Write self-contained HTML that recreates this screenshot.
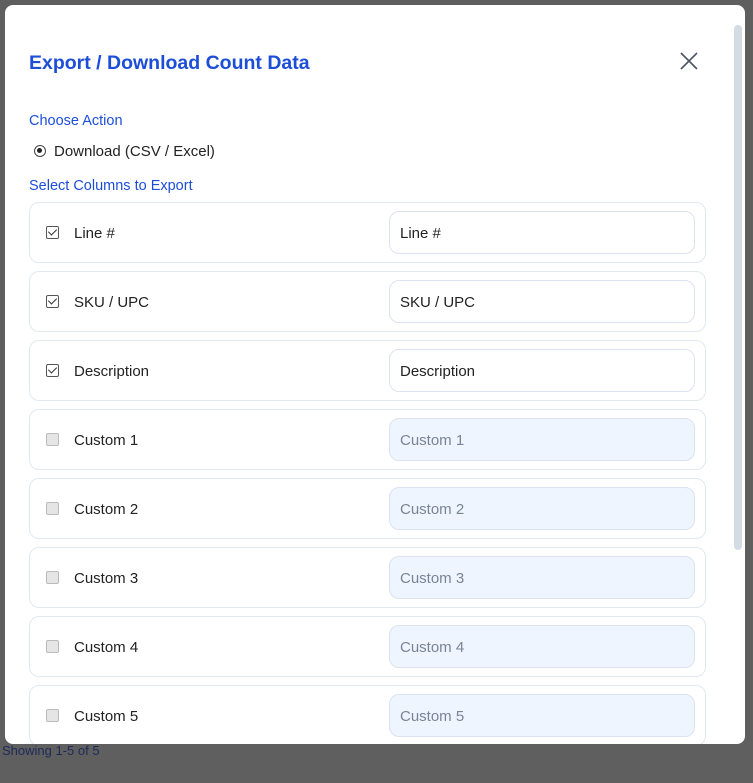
<!DOCTYPE html>
<html><head><style>
*{box-sizing:border-box;margin:0;padding:0}
body{width:753px;height:783px;overflow:hidden;background:#5e5e5e;font-family:"Liberation Sans",sans-serif;position:relative}
.bg{position:absolute;left:0;top:0;width:753px;height:783px;background:#5f5f5f}
.foot{position:absolute;left:0;top:744px;width:753px;color:#1e2a5a;font-size:13px}
.modal{position:absolute;left:5px;top:5px;width:740px;height:739px;background:#fff;border-radius:8px;overflow:hidden}
h1{position:absolute;left:24px;top:47px;font-size:19.5px;font-weight:bold;color:#1d4ed8}
.x{position:absolute;left:674px;top:46px}
.lbl{position:absolute;left:24px;font-size:14.5px;color:#1d4ed8}
.radio{position:absolute;left:29px;top:138px;font-size:15px;color:#222}
.radio i{display:inline-block;width:12px;height:12px;border:1.5px solid #444;border-radius:50%;position:relative;top:1px;margin-right:8px}
.radio i:after{content:"";position:absolute;left:2px;top:2px;width:5px;height:5px;border-radius:50%;background:#222}
.row{position:absolute;left:24px;width:677px;height:61px;border:1px solid #e2e8f0;border-radius:10px}
.cb{position:absolute;left:16px;top:23px;width:13px;height:13px;border:1px solid #555;border-radius:2px;background:#fff}
.cb.on:after{content:"";position:absolute;left:3px;top:0px;width:4px;height:7px;border:solid #333;border-width:0 1.5px 1.5px 0;transform:rotate(45deg)}
.cb.off{background:#e5e5e5;border-color:#bbb}
.name{position:absolute;left:44px;top:22px;font-size:15px;color:#222}
.inp{position:absolute;left:359px;top:8px;width:306px;height:43px;border:1px solid #dbe3ee;border-radius:10px;padding:13px 10px 0;font-size:15px;color:#222;background:#fff}
.inp.dis{background:#eef5ff;color:#7a8494}
.sb{position:absolute;left:729px;top:20px;width:8px;height:525px;background:#d3dbe3;border-radius:4px}
</style></head><body>
<div class="bg"></div>
<div class="foot"><span style="position:absolute;left:2px;top:-1px;">Showing 1-5 of 5</span></div>
<div class="modal">
<h1>Export / Download Count Data</h1>
<svg class="x" width="20" height="20" viewBox="0 0 20 20"><path d="M2 2L18 18M18 2L2 18" stroke="#4b5563" stroke-width="1.6"/></svg>
<div class="lbl" style="top:108px">Choose Action</div>
<div class="radio"><i></i>Download (CSV / Excel)</div>
<div class="lbl" style="top:173px">Select Columns to Export</div>
<div class="row" style="top:197px"><div class="cb on"></div><div class="name">Line #</div><div class="inp">Line #</div></div>
<div class="row" style="top:266px"><div class="cb on"></div><div class="name">SKU / UPC</div><div class="inp">SKU / UPC</div></div>
<div class="row" style="top:335px"><div class="cb on"></div><div class="name">Description</div><div class="inp">Description</div></div>
<div class="row" style="top:404px"><div class="cb off"></div><div class="name">Custom 1</div><div class="inp dis">Custom 1</div></div>
<div class="row" style="top:473px"><div class="cb off"></div><div class="name">Custom 2</div><div class="inp dis">Custom 2</div></div>
<div class="row" style="top:542px"><div class="cb off"></div><div class="name">Custom 3</div><div class="inp dis">Custom 3</div></div>
<div class="row" style="top:611px"><div class="cb off"></div><div class="name">Custom 4</div><div class="inp dis">Custom 4</div></div>
<div class="row" style="top:680px"><div class="cb off"></div><div class="name">Custom 5</div><div class="inp dis">Custom 5</div></div>
<div class="sb"></div>
</div>
</body></html>
